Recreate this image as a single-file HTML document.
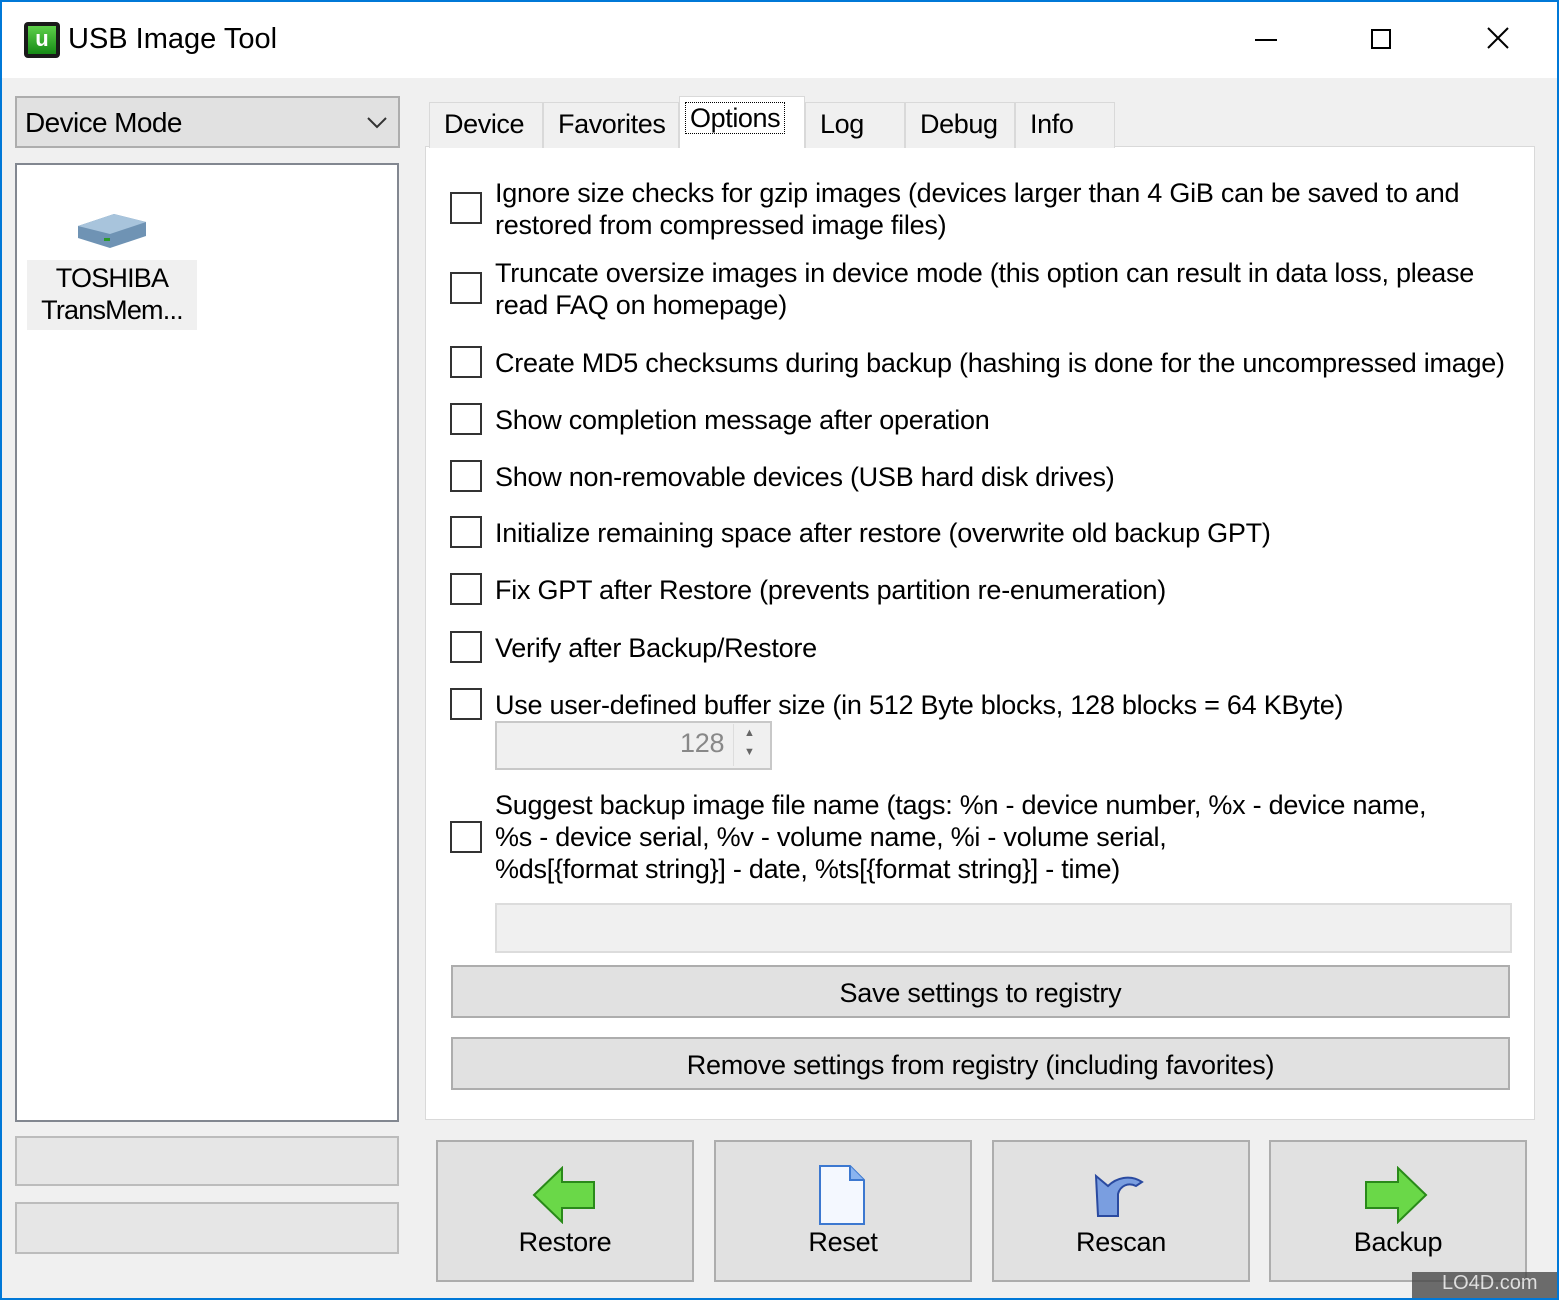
<!DOCTYPE html>
<html><head><meta charset="utf-8"><style>
*{box-sizing:border-box;margin:0;padding:0}
body{width:1559px;height:1300px;background:#0078d7;position:relative;overflow:hidden;font-family:"Liberation Sans",sans-serif;color:#000}
.win{position:absolute;left:2px;top:2px;width:1555px;height:1296px;background:#f0f0f0}
.title{position:absolute;left:0;top:0;width:1555px;height:76px;background:#fff}
.a{position:absolute;white-space:nowrap}
.t{font-size:27px;letter-spacing:-0.25px;line-height:32px}
.cb{position:absolute;left:448px;width:32px;height:32px;border:2px solid #333;background:#fff}
.btn{position:absolute;background:#e1e1e1;border:2px solid #adadad}
.tab{position:absolute;top:100px;height:46px;background:#f0f0f0;border:1px solid #d9d9d9;border-bottom:none;font-size:27px;letter-spacing:-0.4px;padding:6px 0 0 14px}
</style></head><body>
<div class="win">
<div class="title">
 <div class="a" style="left:22px;top:20px;width:36px;height:36px;background:#1a1a1a;border-radius:4px"></div>
 <div class="a" style="left:26px;top:24px;width:28px;height:28px;background:linear-gradient(#5ed04a,#168a16);color:#fff;font-weight:bold;font-size:22px;text-align:center;line-height:26px">u</div>
 <div class="a" style="left:66px;top:21px;font-size:29px">USB Image Tool</div>
 <div class="a" style="left:1253px;top:37px;width:22px;height:2px;background:#000"></div>
 <div class="a" style="left:1369px;top:27px;width:20px;height:20px;border:2px solid #000"></div>
 <svg class="a" style="left:1485px;top:25px" width="22" height="22"><path d="M1 1L21 21M21 1L1 21" stroke="#000" stroke-width="2"/></svg>
</div>
<!-- left -->
<div class="a" style="left:13px;top:94px;width:385px;height:52px;background:#e1e1e1;border:2px solid #adadad"></div>
<div class="a t" style="left:23px;top:105px;font-size:28px;letter-spacing:-0.6px">Device Mode</div>
<svg class="a" style="left:364px;top:114px" width="22" height="14"><path d="M2 2 L11 11 L20 2" stroke="#333" stroke-width="2" fill="none"/></svg>
<div class="a" style="left:13px;top:161px;width:384px;height:959px;background:#fff;border:2px solid #828790"></div>
<svg class="a" style="left:72px;top:206px" width="76" height="42"><path d="M4 18 L40 6 L72 14 L72 28 L36 40 L4 30Z" fill="#6f93b4"/><path d="M4 18 L40 6 L72 14 L36 26Z" fill="#a8c4dc"/><rect x="30" y="30" width="6" height="3" fill="#2b9a2b"/></svg>
<div class="a" style="left:25px;top:258px;width:170px;height:70px;background:#f0f0f0"></div>
<div class="a t" style="left:25px;top:260px;width:170px;text-align:center;letter-spacing:-0.8px">TOSHIBA<br>TransMem...</div>
<div class="a" style="left:13px;top:1134px;width:384px;height:50px;background:#e6e6e6;border:2px solid #bcbcbc"></div>
<div class="a" style="left:13px;top:1200px;width:384px;height:52px;background:#e6e6e6;border:2px solid #bcbcbc"></div>
<!-- tabs -->
<div class="a" style="left:423px;top:144px;width:1110px;height:974px;background:#fff;border:1px solid #d9d9d9"></div>
<div class="tab" style="left:427px;width:114px">Device</div>
<div class="tab" style="left:541px;width:136px">Favorites</div>
<div class="tab" style="left:677px;top:94px;height:52px;width:126px;background:#fff;padding:6px 0 0 5px"><span style="border:1px dotted #000;padding:0 4px">Options</span></div>
<div class="tab" style="left:803px;width:100px">Log</div>
<div class="tab" style="left:903px;width:110px">Debug</div>
<div class="tab" style="left:1013px;width:100px">Info</div>
<!-- options -->
<div class="cb" style="top:190px"></div>
<div class="a t" style="left:493px;top:175px">Ignore size checks for gzip images (devices larger than 4 GiB can be saved to and<br>restored from compressed image files)</div>
<div class="cb" style="top:270px"></div>
<div class="a t" style="left:493px;top:255px">Truncate oversize images in device mode (this option can result in data loss, please<br>read FAQ on homepage)</div>
<div class="cb" style="top:344px"></div>
<div class="a t" style="left:493px;top:345px">Create MD5 checksums during backup (hashing is done for the uncompressed image)</div>
<div class="cb" style="top:401px"></div>
<div class="a t" style="left:493px;top:402px">Show completion message after operation</div>
<div class="cb" style="top:458px"></div>
<div class="a t" style="left:493px;top:459px">Show non-removable devices (USB hard disk drives)</div>
<div class="cb" style="top:514px"></div>
<div class="a t" style="left:493px;top:515px">Initialize remaining space after restore (overwrite old backup GPT)</div>
<div class="cb" style="top:571px"></div>
<div class="a t" style="left:493px;top:572px">Fix GPT after Restore (prevents partition re-enumeration)</div>
<div class="cb" style="top:629px"></div>
<div class="a t" style="left:493px;top:630px">Verify after Backup/Restore</div>
<div class="cb" style="top:686px"></div>
<div class="a t" style="left:493px;top:687px">Use user-defined buffer size (in 512 Byte blocks, 128 blocks = 64 KByte)</div>
<div class="a" style="left:493px;top:719px;width:277px;height:49px;background:#f0f0f0;border:2px solid #c8c8c8"></div>
<div class="a t" style="left:678px;top:725px;color:#888">128</div>
<div class="a" style="left:731px;top:722px;width:32px;height:42px;border-left:1px solid #ddd;color:#666;font-size:11px;text-align:center;line-height:19px">▲<br>▼</div>
<div class="cb" style="top:819px"></div>
<div class="a t" style="left:493px;top:787px">Suggest backup image file name (tags: %n - device number, %x - device name,<br>%s - device serial, %v - volume name, %i - volume serial,<br>%ds[{format string}] - date, %ts[{format string}] - time)</div>
<div class="a" style="left:493px;top:901px;width:1017px;height:50px;background:#f0f0f0;border:2px solid #dcdcdc"></div>
<div class="btn" style="left:449px;top:963px;width:1059px;height:53px"></div>
<div class="a t" style="left:449px;top:975px;width:1059px;text-align:center">Save settings to registry</div>
<div class="btn" style="left:449px;top:1035px;width:1059px;height:53px"></div>
<div class="a t" style="left:449px;top:1047px;width:1059px;text-align:center">Remove settings from registry (including favorites)</div>
<!-- bottom buttons -->
<div class="btn" style="left:434px;top:1138px;width:258px;height:142px"></div>
<svg class="a" style="left:530px;top:1164px" width="64" height="58"><path d="M2 29 L30 2 L30 16 L62 16 L62 42 L30 42 L30 56Z" fill="#6ad848" stroke="#2a8a1a" stroke-width="2"/></svg>
<div class="a t" style="left:434px;top:1224px;width:258px;text-align:center">Restore</div>
<div class="btn" style="left:712px;top:1138px;width:258px;height:142px"></div>
<svg class="a" style="left:816px;top:1162px" width="48" height="62"><path d="M2 2 L32 2 L46 16 L46 60 L2 60Z" fill="#f4f8ff" stroke="#3c78d0" stroke-width="2"/><path d="M32 2 L32 16 L46 16" fill="#8ab4f0" stroke="#3c78d0" stroke-width="2"/></svg>
<div class="a t" style="left:712px;top:1224px;width:258px;text-align:center">Reset</div>
<div class="btn" style="left:990px;top:1138px;width:258px;height:142px"></div>
<svg class="a" style="left:1090px;top:1170px" width="56" height="46"><path d="M4 4 L16 14 C24 6 38 2 50 10 L44 14 C36 10 28 14 26 22 L26 44 L6 44Z" fill="#7a9ee0" stroke="#2a4aa0" stroke-width="2"/></svg>
<div class="a t" style="left:990px;top:1224px;width:258px;text-align:center">Rescan</div>
<div class="btn" style="left:1267px;top:1138px;width:258px;height:142px"></div>
<svg class="a" style="left:1362px;top:1164px" width="64" height="58"><path d="M62 29 L34 2 L34 16 L2 16 L2 42 L34 42 L34 56Z" fill="#6ad848" stroke="#2a8a1a" stroke-width="2"/></svg>
<div class="a t" style="left:1267px;top:1224px;width:258px;text-align:center">Backup</div>
<div class="a" style="left:1410px;top:1270px;width:145px;height:26px;background:#4a4a4a;opacity:.8;color:#ddd;font-size:20px;padding-left:30px">LO4D.com</div>
</div>
</body></html>
